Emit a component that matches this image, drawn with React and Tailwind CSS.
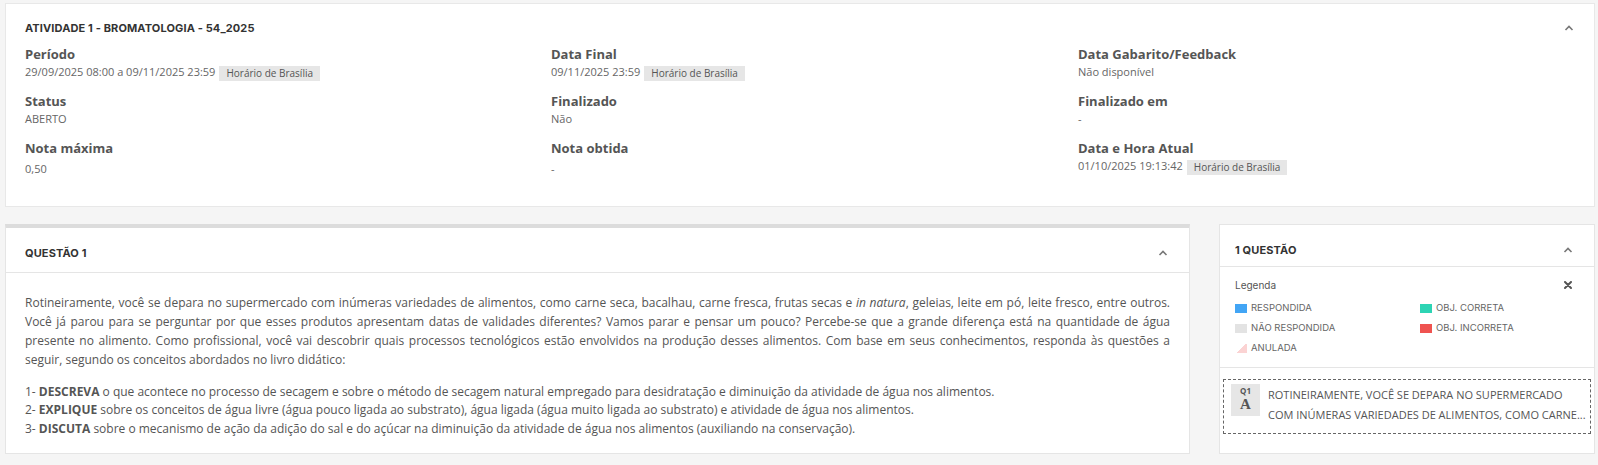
import React from 'react';

const Chevron = () => (
  <svg width="10" height="6" viewBox="0 0 10 6" className="text-[#777]">
    <polyline points="1.5,5 5,1.5 8.5,5" fill="none" stroke="currentColor" strokeWidth="1.6" />
  </svg>
);

const Badge = ({ children }) => (
  <span className="ml-[4px] inline-block bg-[#e6e6e6] px-[7px] text-[10px] leading-[15px] text-[#555] align-middle">
    {children}
  </span>
);

const Field = ({ label, children }) => (
  <div className="mb-[11px]">
    <div className="text-[13px] leading-[18px] font-bold text-[#555]">{label}</div>
    <div className="text-[11px] leading-[18px] text-[#666]">{children}</div>
  </div>
);

const legend = [
  { label: 'RESPONDIDA', cls: 'bg-[#42a5f5]' },
  { label: 'OBJ. CORRETA', cls: 'bg-[#2dd4b4]' },
  { label: 'NÃO RESPONDIDA', cls: 'bg-[#e3e3e3]' },
  { label: 'OBJ. INCORRETA', cls: 'bg-[#ef5350]' },
  { label: 'ANULADA', cls: 'bg-[linear-gradient(135deg,transparent_50%,#fbd3d3_50%)]' },
];

export default function App() {
  return (
    <div className="min-h-screen bg-[#f5f5f5] pt-[3px] pl-[5px] pr-[3px] font-['Open_Sans',sans-serif] text-[#555]">
      {/* atividade */}
      <div className="h-[204px] border border-[#e8e8e8] bg-white pl-[19px] pr-[20px] pt-[15px]">
        <div className="flex items-center justify-between">
          <h1 className="font-['Inter',sans-serif] text-[11px] leading-[18px] font-bold tracking-[0.12px] text-[#333]">
            ATIVIDADE 1 - BROMATOLOGIA - 54_2025
          </h1>
          <Chevron />
        </div>
        <div className="mt-[8px] grid grid-cols-[526px_527px_1fr]">
          <div>
            <Field label="Período">
              29/09/2025 08:00 a 09/11/2025 23:59<Badge>Horário de Brasília</Badge>
            </Field>
            <Field label="Status">ABERTO</Field>
            <Field label="Nota máxima">
              <span className="inline-block pt-[3px]">0,50</span>
            </Field>
          </div>
          <div>
            <Field label="Data Final">
              09/11/2025 23:59<Badge>Horário de Brasília</Badge>
            </Field>
            <Field label="Finalizado">Não</Field>
            <Field label="Nota obtida">
              <span className="inline-block pt-[3px]">-</span>
            </Field>
          </div>
          <div>
            <Field label="Data Gabarito/Feedback">Não disponível</Field>
            <Field label="Finalizado em">-</Field>
            <Field label="Data e Hora Atual">
              01/10/2025 19:13:42<Badge>Horário de Brasília</Badge>
            </Field>
          </div>
        </div>
      </div>

      <div className="mt-[17px] flex gap-[29px]">
        {/* questão */}
        <div className="h-[230px] w-[1185px] shrink-0 border border-t-4 border-[#e5e5e5] border-t-[#dcdcdc] bg-white">
          <div className="flex h-[45px] items-start justify-between border-b border-[#e5e5e5] pl-[19px] pr-[21px] pt-[16px]">
            <h2 className="font-['Inter',sans-serif] text-[11px] leading-[18px] font-bold tracking-[0.12px] text-[#333]">
              QUESTÃO 1
            </h2>
            <span className="pt-[6px]">
              <Chevron />
            </span>
          </div>
          <div className="px-[19px] pt-[20px] text-[12px] text-[#555]">
            <p className="text-justify leading-[19px]">
              Rotineiramente, você se depara no supermercado com inúmeras variedades de alimentos, como carne seca,
              bacalhau, carne fresca, frutas secas e <em>in natura</em>, geleias, leite em pó, leite fresco, entre
              outros. Você já parou para se perguntar por que esses produtos apresentam datas de validades diferentes?
              Vamos parar e pensar um pouco? Percebe-se que a grande diferença está na quantidade de água presente no
              alimento. Como profissional, você vai descobrir quais processos tecnológicos estão envolvidos na produção
              desses alimentos. Com base em seus conhecimentos, responda às questões a seguir, segundo os conceitos
              abordados no livro didático:
            </p>
            <div className="mt-[14px] leading-[18.3px]">
              <p>
                1- <b>DESCREVA</b> o que acontece no processo de secagem e sobre o método de secagem natural empregado
                para desidratação e diminuição da atividade de água nos alimentos.
              </p>
              <p>
                2- <b>EXPLIQUE</b> sobre os conceitos de água livre (água pouco ligada ao substrato), água ligada (água
                muito ligada ao substrato) e atividade de água nos alimentos.
              </p>
              <p>
                3- <b>DISCUTA</b> sobre o mecanismo de ação da adição do sal e do açúcar na diminuição da atividade de
                água nos alimentos (auxiliando na conservação).
              </p>
            </div>
          </div>
        </div>

        {/* navegação */}
        <div className="h-[230px] min-w-0 flex-1 border border-[#e5e5e5] bg-white">
          <div className="flex h-[42px] items-start justify-between border-b border-[#e5e5e5] pl-[15px] pr-[21px] pt-[16px]">
            <h2 className="font-['Inter',sans-serif] text-[11px] leading-[18px] font-bold tracking-[0.12px] text-[#333]">
              1 QUESTÃO
            </h2>
            <span className="pt-[6px]">
              <Chevron />
            </span>
          </div>
          <div className="border-b border-[#e5e5e5] pl-[15px] pr-[22px] pt-[11px] pb-[12px] font-['Inter',sans-serif]">
            <div className="flex items-center justify-between">
              <span className="text-[10px] leading-[14px] text-[#555]">Legenda</span>
              <svg width="8" height="8" viewBox="0 0 8 8">
                <path d="M1 1L7 7M7 1L1 7" stroke="#555" strokeWidth="2" strokeLinecap="round" />
              </svg>
            </div>
            <div className="mt-[9px] grid grid-cols-[185px_1fr] gap-y-[6px]">
              {legend.map((l) => (
                <div key={l.label} className="flex items-center gap-[4px] text-[9.5px] leading-[14px] text-[#666]">
                  <span className={`h-[9px] w-[12px] ${l.cls}`} />
                  {l.label}
                </div>
              ))}
            </div>
          </div>
          <div className="px-[3px] pt-[11px]">
            <div className="flex gap-[8px] border border-dashed border-[#666] pl-[7px] pr-[3px] pt-[3px] pb-[8px]">
              <div className="mt-[1px] flex h-[32px] w-[29px] shrink-0 flex-col items-center bg-[#e6e6e6] pt-[1px]">
                <span className="text-[8px] leading-[11px] font-bold text-[#555]">Q1</span>
                <span className="font-['Liberation_Serif',serif] text-[15px] leading-[17px] font-bold text-[#555]">A</span>
              </div>
              <div className="min-w-0 flex-1 overflow-hidden pt-[2px] text-[11px] leading-[20px] text-[#555]">
                <div className="whitespace-nowrap">ROTINEIRAMENTE, VOCÊ SE DEPARA NO SUPERMERCADO</div>
                <div className="whitespace-nowrap">COM INÚMERAS VARIEDADES DE ALIMENTOS, COMO CARNE...</div>
              </div>
            </div>
          </div>
        </div>
      </div>
    </div>
  );
}
